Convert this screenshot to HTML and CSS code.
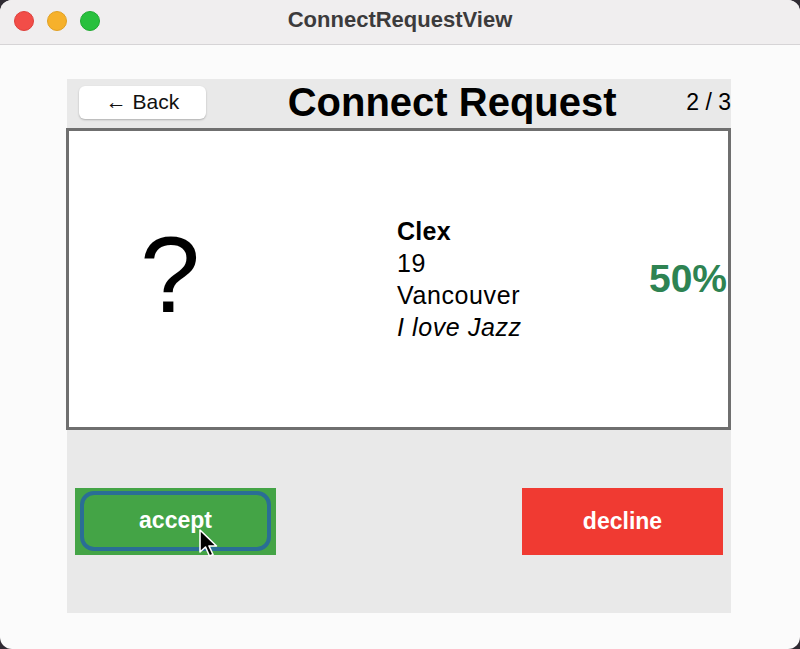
FILE: index.html
```html
<!DOCTYPE html>
<html>
<head>
    <meta charset="utf-8">
    <title>ConnectRequestView</title>
    <link rel="stylesheet" href="styles.css">
</head>
<body>
<div class="window">
    <div class="titlebar">
        <div class="lights">
            <i class="light red"></i>
            <i class="light yellow"></i>
            <i class="light green"></i>
        </div>
        <div class="window_title">ConnectRequestView</div>
    </div>
    <div class="content">
        <div class="panel">
            <div class="header">
                <button type="button" class="back_btn">&larr; Back</button>
                <h1 class="page_title">Connect Request</h1>
                <div class="counter">2 / 3</div>
            </div>
            <div class="card">
                <div class="avatar">?</div>
                <div class="info">
                    <div class="name">Clex</div>
                    <div>19</div>
                    <div>Vancouver</div>
                    <div class="bio">I love Jazz</div>
                </div>
                <div class="match">50%</div>
            </div>
            <div class="actions">
                <button type="button" class="action accept"><span class="focus_ring">accept</span></button>
                <button type="button" class="action decline">decline</button>
            </div>
        </div>
    </div>
    <svg class="cursor" width="22" height="30" viewBox="0 0 22 30">
        <path d="M1 1 L1 23 L6.5 18 L10.5 27 L14 25.5 L10 17 L17.5 17 Z" fill="#000" stroke="#fff" stroke-width="1.6" stroke-linejoin="round"/>
    </svg>
</div>
</body>
</html>
```

FILE: styles.css
```css
* {
    box-sizing: border-box;
}

body {
    margin: 0;
    background: #302b33;
    font-family: "Liberation Sans", Arial, sans-serif;
}

.window {
    position: relative;
    display: flex;
    flex-direction: column;
    width: 800px;
    height: 649px;
    border-radius: 12px;
    overflow: hidden;
    background: #fbfbfb;
}

.titlebar {
    position: relative;
    display: flex;
    align-items: center;
    justify-content: center;
    height: 45px;
    background: #f0eeef;
    border-bottom: 1px solid #d6d4d6;
}

.lights {
    position: absolute;
    top: 11px;
    left: 14px;
    display: flex;
    gap: 13px;
}

.light {
    display: block;
    width: 20px;
    height: 20px;
    border-radius: 50%;
}

.light.red {
    background: #f24d48;
    border: 1px solid #dd3f3b;
}

.light.yellow {
    background: #f6b12b;
    border: 1px solid #e0a024;
}

.light.green {
    background: #28c03d;
    border: 1px solid #1fa931;
}

.window_title {
    font-size: 22px;
    font-weight: bold;
    color: #3c3b3c;
    margin-top: -4px;
}

.content {
    flex: 1;
    padding: 34px 69px 36px 67px;
}

.panel {
    display: flex;
    flex-direction: column;
    height: 100%;
    background: #e9e9e9;
}

.header {
    display: flex;
    align-items: center;
    height: 49px;
    padding: 0 0 3px 12px;
}

.back_btn {
    width: 127px;
    height: 33px;
    border: none;
    border-radius: 6px;
    background: #fff;
    box-shadow: 0 1px 2px rgba(0, 0, 0, 0.25);
    font-family: inherit;
    font-size: 21px;
    color: #111;
    padding: 0 0 1px;
}

.page_title {
    flex: 1;
    margin: 0;
    padding-left: 12px;
    text-align: center;
    font-size: 40px;
    line-height: 1;
    color: #000;
}

.counter {
    font-size: 23px;
    color: #000;
}

.card {
    display: flex;
    align-items: center;
    height: 302px;
    margin-left: -1px;
    background: #fff;
    border: 3px solid #6f6f6f;
}

.avatar {
    width: 202px;
    padding-bottom: 9px;
    text-align: center;
    font-size: 108px;
    line-height: 1;
    color: #000;
}

.info {
    flex: 1;
    margin-left: 126px;
    font-size: 25px;
    line-height: 32px;
    letter-spacing: 0.6px;
    color: #000;
}

.info .name {
    font-weight: bold;
    letter-spacing: 0.3px;
}

.info .bio {
    font-style: italic;
}

.match {
    font-size: 39px;
    font-weight: bold;
    color: #2e8352;
    padding-right: 1px;
}

.actions {
    flex: 1;
    display: flex;
    align-items: center;
    justify-content: space-between;
    padding: 0 8px;
}

.action {
    display: flex;
    align-items: center;
    justify-content: center;
    width: 201px;
    height: 67px;
    border: none;
    border-radius: 0;
    font-family: inherit;
    font-size: 23px;
    font-weight: bold;
    color: #fff;
    padding: 0;
}

.accept {
    background: #44a446;
    padding: 3px 5px 4px;
}

.accept .focus_ring {
    display: flex;
    align-items: center;
    justify-content: center;
    width: 100%;
    height: 100%;
    border: 4px solid #2a6e95;
    border-radius: 14px;
    padding-bottom: 1px;
}

.decline {
    background: #f03a32;
}

.cursor {
    position: absolute;
    left: 199px;
    top: 529px;
}
```
